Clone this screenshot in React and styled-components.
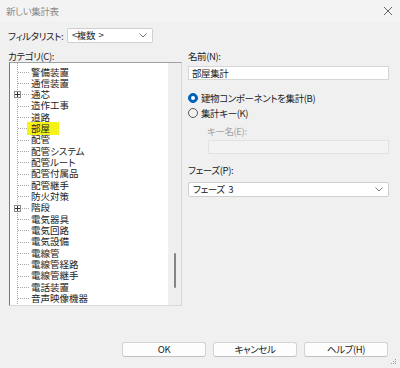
import React from "react";
import styled, { createGlobalStyle } from "styled-components";

const GlobalStyle = createGlobalStyle`
  * { box-sizing: border-box; }
  body {
    margin: 0;
    background: #f0f0f0;
    font-family: "Noto Sans CJK JP", "Noto Sans", sans-serif;
    font-feature-settings: "palt";
    color: #222;
  }
`;

const Window = styled.div`
  position: relative;
  width: 400px;
  height: 368px;
  display: flex;
  flex-direction: column;
  background: #f0f0f0;
  font-size: 9.5px;
  letter-spacing: -0.4px;
`;

const TitleBar = styled.div`
  height: 22px;
  display: flex;
  align-items: center;
  justify-content: space-between;
  padding: 0 7px 0 6px;
  background: #f3f3f3;
  color: #8a8a8a;
`;

const Body = styled.div`
  flex: 1;
  display: flex;
  flex-direction: column;
  padding: 6px 11px 11px 8px;
`;

const FilterRow = styled.div`
  display: grid;
  grid-template-columns: 59px 86px;
  align-items: center;
  height: 15px;
`;

const Label = styled.div`
  line-height: 12px;
  height: 12px;
  white-space: nowrap;
  color: ${(p) => (p.disabled ? "#a2a2a2" : "#222")};
  margin-left: ${(p) => p.indent || 0}px;
  margin-top: ${(p) => p.top || 0}px;
`;

const SelectBox = styled.div`
  display: flex;
  align-items: center;
  justify-content: space-between;
  height: 15px;
  margin-top: ${(p) => p.top || 0}px;
  padding: 0 5px 0 4px;
  background: #fff;
  border: 1px solid #cfcfcf;
  border-radius: 2px;
  line-height: 13px;
  white-space: pre;
`;

const Main = styled.div`
  display: grid;
  grid-template-columns: 174px 201px;
  column-gap: 6px;
  margin-top: 7px;
`;

const Column = styled.div`
  display: flex;
  flex-direction: column;
`;

const TreePanel = styled.div`
  display: flex;
  margin-left: 1px;
  height: 244px;
  border-top: 1px solid #a0a0a0;
  border-left: 1px solid #7a7a7a;
  border-right: 1px solid #d9d9d9;
  border-bottom: 1px solid #d9d9d9;
`;

const TreeList = styled.ul`
  list-style: none;
  margin: 0;
  padding: 3.5px 0 0;
  width: 158px;
  background-color: #fff;
  background-image: repeating-linear-gradient(to bottom, #a8a8a8 0 1px, transparent 1px 2px);
  background-size: 1px 100%;
  background-position: 7px 0;
  background-repeat: no-repeat;
  overflow: hidden;
`;

const TreeRow = styled.li`
  display: flex;
  align-items: center;
  height: 11.33px;
  background-image: repeating-linear-gradient(to right, #a8a8a8 0 1px, transparent 1px 2px);
  background-size: 12px 1px;
  background-position: 8px 50%;
  background-repeat: no-repeat;
  white-space: nowrap;
`;

const Gutter = styled.span`
  width: 17px;
  flex-shrink: 0;
  display: flex;
  align-items: center;
  padding-left: 4px;
`;

const Toggle = styled.span`
  width: 7px;
  height: 7px;
  display: flex;
  align-items: center;
  justify-content: center;
  background: #fff;
  border: 1px solid #8c8c8c;
`;

const ItemText = styled.span`
  line-height: 11.33px;
  letter-spacing: 0;
  padding: ${(p) => (p.highlight ? "1px 4px" : "0 4px")};
  margin: ${(p) => (p.highlight ? "-1px 0" : "0")};
  background: ${(p) => (p.highlight ? "#f5f217" : "transparent")};
  width: ${(p) => (p.highlight ? "32px" : "auto")};
`;

const ScrollTrack = styled.div`
  flex: 1;
  position: relative;
  background: #efefef;
`;

const ScrollThumb = styled.div`
  position: absolute;
  left: 6px;
  top: 190px;
  width: 2px;
  height: 35px;
  background: #858585;
  border-radius: 1px;
`;

const TextInput = styled.div`
  height: 14px;
  margin-top: ${(p) => p.top || 0}px;
  margin-left: ${(p) => p.indent || 0}px;
  padding-left: 3px;
  line-height: 12px;
  background: ${(p) => (p.disabled ? "#f3f3f3" : "#fff")};
  border: 1px solid ${(p) => (p.disabled ? "#e2e2e2" : "#d6d6d6")};
`;

const RadioRow = styled.div`
  display: flex;
  align-items: center;
  gap: 3px;
  height: 12px;
  white-space: nowrap;
  margin-top: ${(p) => p.top || 0}px;
`;

const Radio = styled.span`
  width: 10px;
  height: 10px;
  flex-shrink: 0;
  border-radius: 50%;
  display: flex;
  align-items: center;
  justify-content: center;
  background: ${(p) => (p.checked ? "#005fb8" : "transparent")};
  border: 1px solid ${(p) => (p.checked ? "#005fb8" : "#5a5a5a")};

  &::after {
    content: "";
    display: ${(p) => (p.checked ? "block" : "none")};
    width: 4px;
    height: 4px;
    border-radius: 50%;
    background: #fff;
  }
`;

const Footer = styled.div`
  margin-top: auto;
  display: flex;
  justify-content: flex-end;
  gap: 7px;
  padding-right: 1px;
`;

const Button = styled.button`
  width: 84px;
  height: 15px;
  padding: 0;
  font: inherit;
  letter-spacing: inherit;
  line-height: 13px;
  color: #222;
  background: #fdfdfd;
  border: 1px solid #d3d3d3;
  border-bottom-color: #c2c2c2;
  border-radius: 3px;
`;

const Grip = styled.svg`
  position: absolute;
  right: 3px;
  bottom: 3px;
`;

const Chevron = () => (
  <svg width="8" height="5" viewBox="0 0 8 5">
    <path d="M0.5 0.5 L4 4 L7.5 0.5" fill="none" stroke="#6a6a6a" strokeWidth="0.9" />
  </svg>
);

const items = [
  { name: "警備装置" },
  { name: "通信装置" },
  { name: "通芯", expandable: true },
  { name: "造作工事" },
  { name: "道路" },
  { name: "部屋", highlight: true },
  { name: "配管" },
  { name: "配管システム" },
  { name: "配管ルート" },
  { name: "配管付属品" },
  { name: "配管継手" },
  { name: "防火対策" },
  { name: "階段", expandable: true },
  { name: "電気器具" },
  { name: "電気回路" },
  { name: "電気設備" },
  { name: "電線管" },
  { name: "電線管経路" },
  { name: "電線管継手" },
  { name: "電話装置" },
  { name: "音声映像機器" },
];

const App = () => {
  return (
    <Window>
      <GlobalStyle />
      <TitleBar>
        <span>新しい集計表</span>
        <svg width="10" height="10" viewBox="0 0 10 10">
          <path d="M1 1 L9 9 M9 1 L1 9" stroke="#555" strokeWidth="0.9" />
        </svg>
      </TitleBar>
      <Body>
        <FilterRow>
          <Label>フィルタリスト:</Label>
          <SelectBox>
            <span>{"<複数  >"}</span>
            <Chevron />
          </SelectBox>
        </FilterRow>
        <Main>
          <Column>
            <Label>カテゴリ(C):</Label>
            <TreePanel>
              <TreeList>
                {items.map((it) => (
                  <TreeRow key={it.name}>
                    <Gutter>
                      {it.expandable && (
                        <Toggle>
                          <svg width="5" height="5" viewBox="0 0 5 5">
                            <path d="M0 2.5 H5 M2.5 0 V5" stroke="#333" strokeWidth="1" />
                          </svg>
                        </Toggle>
                      )}
                    </Gutter>
                    <ItemText highlight={it.highlight}>{it.name}</ItemText>
                  </TreeRow>
                ))}
              </TreeList>
              <ScrollTrack>
                <ScrollThumb />
              </ScrollTrack>
            </TreePanel>
          </Column>
          <Column>
            <Label>名前(N):</Label>
            <TextInput top={4}>部屋集計</TextInput>
            <RadioRow top={12}>
              <Radio checked />
              <span>建物コンポーネントを集計(B)</span>
            </RadioRow>
            <RadioRow top={3}>
              <Radio />
              <span>集計キー(K)</span>
            </RadioRow>
            <Label disabled indent={19} top={6}>キー名(E):</Label>
            <TextInput disabled indent={20} top={3} />
            <Label top={10}>フェーズ(P):</Label>
            <SelectBox top={6}>
              <span>{"フェーズ  3"}</span>
              <Chevron />
            </SelectBox>
          </Column>
        </Main>
        <Footer>
          <Button>OK</Button>
          <Button>キャンセル</Button>
          <Button>ヘルプ(H)</Button>
        </Footer>
      </Body>
      <Grip width="6" height="6" viewBox="0 0 6 6">
        <rect x="4" y="0" width="1" height="1" fill="#999" />
        <rect x="2" y="2" width="1" height="1" fill="#999" />
        <rect x="4" y="2" width="1" height="1" fill="#999" />
        <rect x="0" y="4" width="1" height="1" fill="#999" />
        <rect x="2" y="4" width="1" height="1" fill="#999" />
        <rect x="4" y="4" width="1" height="1" fill="#999" />
      </Grip>
    </Window>
  );
};

export default App;
